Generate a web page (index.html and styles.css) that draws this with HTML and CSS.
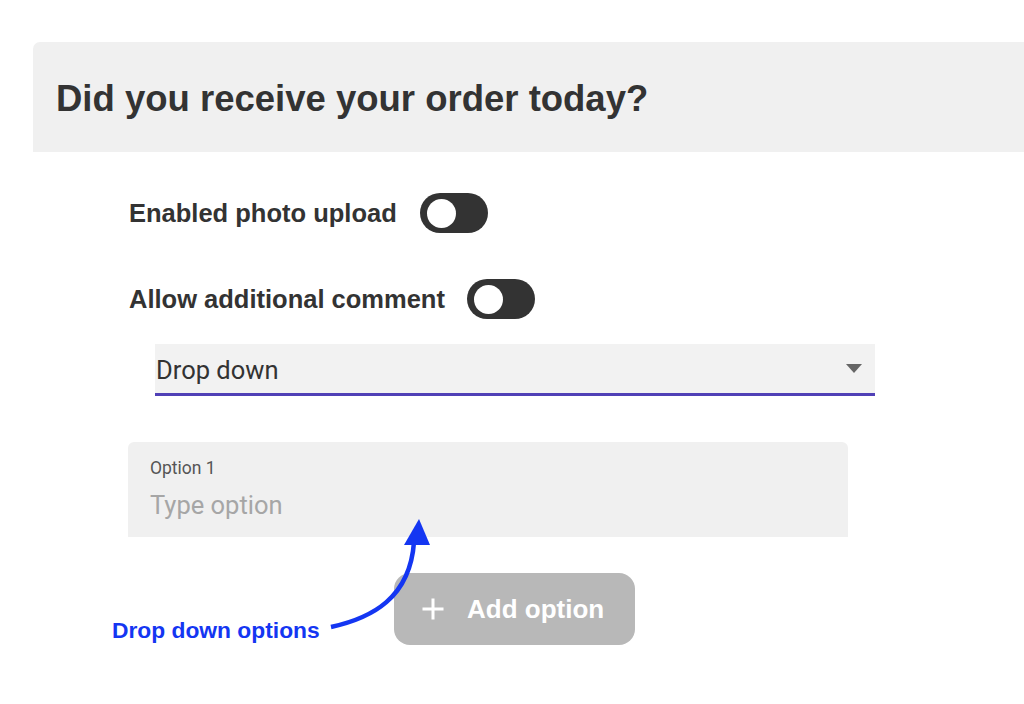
FILE: index.html
```html
<!DOCTYPE html>
<html>
<head>
<meta charset="utf-8">
<link rel="stylesheet" href="styles.css">
</head>
<body>
<div class="panel"><h1 class="title">Did you receive your order today?</h1></div>
<div class="content">
  <div class="toggle-row row1">
    <span class="label">Enabled photo upload</span>
    <span class="toggle"><span class="knob"></span></span>
  </div>
  <div class="toggle-row row2">
    <span class="label">Allow additional comment</span>
    <span class="toggle"><span class="knob"></span></span>
  </div>
  <div class="select">
    <span class="select-text">Drop down</span>
    <span class="caret"></span>
  </div>
  <div class="option-box">
    <div class="option-label">Option 1</div>
    <div class="option-placeholder">Type option</div>
  </div>
  <div class="add-btn">
    <svg class="plus" width="22" height="22" viewBox="0 0 22 22"><path d="M11 0.5V21.5M0.5 11H21.5" stroke="#fff" stroke-width="3" fill="none"/></svg>
    <span class="add-text">Add option</span>
  </div>
</div>
<div class="note">Drop down options</div>
<svg class="arrow" width="1024" height="704" viewBox="0 0 1024 704">
  <path d="M331 627 C 372 618, 410 598, 414 542" stroke="#1436f2" stroke-width="4.5" fill="none"/>
  <path d="M419 519 L404 545 L430 545 Z" fill="#1436f2"/>
</svg>
</body>
</html>
```
FILE: styles.css
```css
html, body {
  margin: 0;
  padding: 0;
  background: #ffffff;
}
body {
  font-family: "Liberation Sans", Arial, sans-serif;
  color: #333333;
  position: relative;
  width: 1024px;
  height: 704px;
  overflow: hidden;
}
.panel {
  margin: 42px 0 0 33px;
  height: 110px;
  background: #f0f0f0;
  border-top-left-radius: 7px;
  display: flex;
  align-items: center;
  padding-left: 23px;
}
.title {
  margin: 0;
  font-size: 36.5px;
  font-weight: bold;
  color: #333333;
  line-height: 1;
  position: relative;
  top: 2px;
}
.content {
  padding-left: 129px;
  display: flex;
  flex-direction: column;
  align-items: flex-start;
}
.toggle-row {
  display: flex;
  align-items: center;
  height: 40px;
}
.row1 {
  margin-top: 41px;
  gap: 23px;
}
.row2 {
  margin-top: 46px;
  gap: 22px;
}
.label {
  font-size: 25.5px;
  font-weight: bold;
  color: #333333;
}
.toggle {
  width: 68px;
  height: 40px;
  border-radius: 20px;
  background: #333333;
  display: flex;
  align-items: center;
  padding-left: 7px;
  box-sizing: border-box;
}
.knob {
  width: 29px;
  height: 29px;
  border-radius: 50%;
  background: #ffffff;
}
.select {
  margin-top: 25px;
  margin-left: 26px;
  width: 720px;
  height: 52px;
  box-sizing: border-box;
  background: #f2f2f2;
  border-bottom: 3px solid #5040b6;
  display: flex;
  align-items: center;
  justify-content: space-between;
  padding: 0 13px 0 1px;
}
.select-text {
  font-family: Roboto, "Liberation Sans", sans-serif;
  font-size: 25.5px;
  color: #333333;
  position: relative;
  top: 1px;
}
.caret {
  width: 0;
  height: 0;
  border-left: 8.5px solid transparent;
  border-right: 8.5px solid transparent;
  border-top: 9px solid #666666;
  position: relative;
  top: 0px;
}
.option-box {
  margin-top: 46px;
  margin-left: -1px;
  width: 720px;
  height: 95px;
  box-sizing: border-box;
  background: #f0f0f0;
  border-radius: 6px 6px 0 0;
  padding: 16px 0 0 22px;
}
.option-label {
  font-family: Roboto, "Liberation Sans", sans-serif;
  font-size: 17.5px;
  color: #555555;
  line-height: 20px;
}
.option-placeholder {
  font-family: Roboto, "Liberation Sans", sans-serif;
  font-size: 25.5px;
  color: #a6a6a6;
  margin-top: 13px;
  line-height: 28px;
}
.add-btn {
  margin-top: 36px;
  margin-left: 265px;
  width: 241px;
  height: 72px;
  border-radius: 16px;
  background: #b8b8b8;
  display: flex;
  align-items: center;
  box-sizing: border-box;
  padding-left: 28px;
}
.plus {
  display: block;
}
.add-text {
  margin-left: 23px;
  font-size: 26px;
  font-weight: bold;
  color: #ffffff;
}
.note {
  position: absolute;
  left: 112px;
  top: 616px;
  font-size: 22.8px;
  font-weight: bold;
  color: #1436f2;
  line-height: 28px;
}
.arrow {
  position: absolute;
  left: 0;
  top: 0;
  pointer-events: none;
}
```
